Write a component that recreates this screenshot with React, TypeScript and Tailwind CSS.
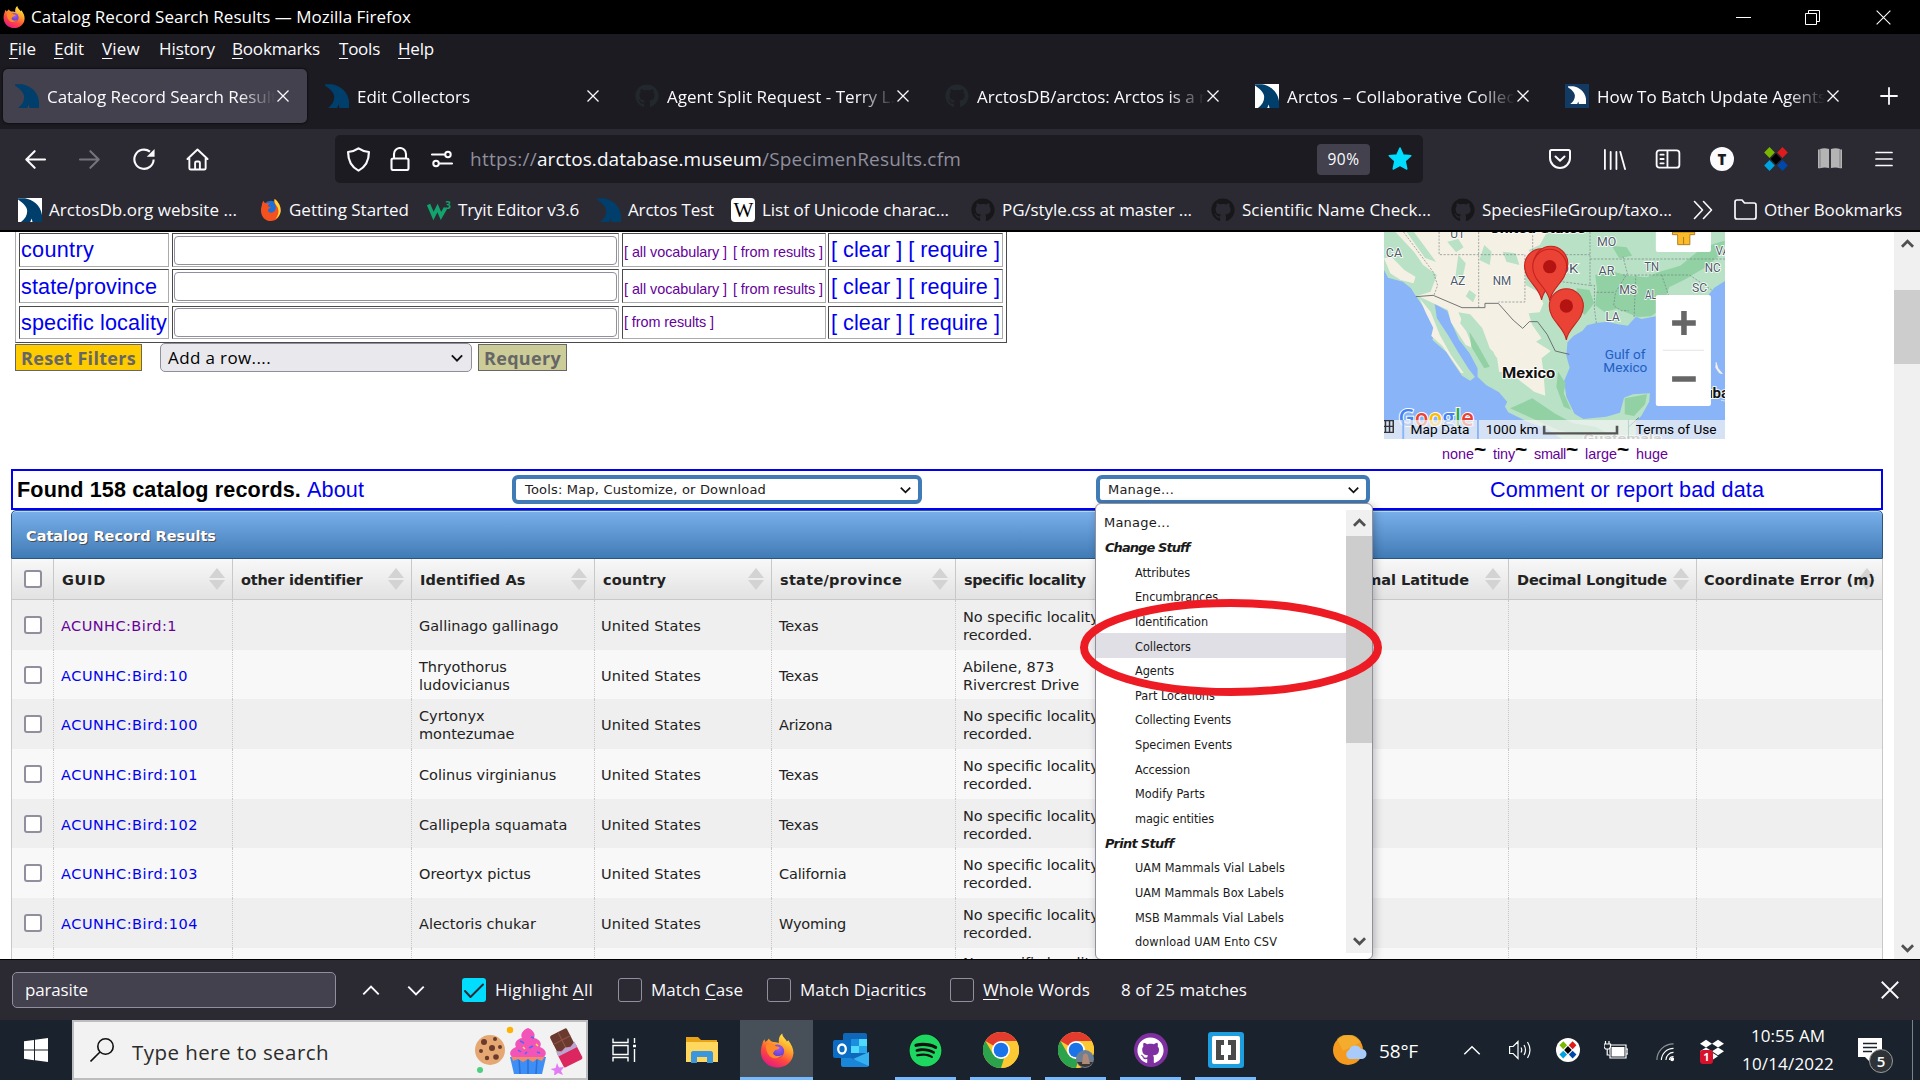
import { useLayoutEffect, useRef, type ReactNode } from "react";
import { FaGithub, FaSpotify, FaDropbox } from "react-icons/fa";

/* Single-line label whose tracking is adjusted so that it spans `w` pixels. */
function Fit({ w, className = "", children }: { w: number; className?: string; children: ReactNode }) {
  const ref = useRef<HTMLSpanElement>(null);
  useLayoutEffect(() => {
    const el = ref.current;
    if (!el) return;
    el.style.letterSpacing = "0px";
    const n = (el.textContent || "").length;
    const natural = el.getBoundingClientRect().width;
    el.style.letterSpacing = `${(w - natural) / n}px`;
  }, [w]);
  return (
    <span ref={ref} className={`inline-block shrink-0 whitespace-pre ${className}`}>
      {children}
    </span>
  );
}

const UI = "font-['Open_Sans','Noto_Sans',sans-serif]";
const ARIAL = "font-['Liberation_Sans',sans-serif]";
const VERD = "font-['DejaVu_Sans',sans-serif]";

/* ---------- icons ---------- */

function Firefox({ className }: { className: string }) {
  return (
    <svg viewBox="0 0 24 24" className={className}>
      <defs>
        <linearGradient id="ffBody" x1="0.8" y1="0" x2="0.25" y2="1">
          <stop offset="0" stopColor="#fff44f" />
          <stop offset="0.35" stopColor="#ffa62b" />
          <stop offset="0.65" stopColor="#ff4a3d" />
          <stop offset="1" stopColor="#e31587" />
        </linearGradient>
        <radialGradient id="ffCore" cx="0.6" cy="0.3" r="0.8">
          <stop offset="0" stopColor="#a05cf0" />
          <stop offset="1" stopColor="#4a35c8" />
        </radialGradient>
      </defs>
      <path d="M1.600 7.500c.2-1.500.8-2.700 1.600-3.500l.5 2c1-.9 2-1.400 2.600-2.500.6 1.200 1.500 2.100 3 2.500 2-.2 3.500.5 4 .8-.3-3 .4-5.500 2.400-6.800 0 2 1.500 3.200 2.800 4.700l.5 1 1-1c2.500 3.500 4 6.500 3.500 10C22.800 20.500 18 24 12.200 24 5.800 24 .8 19.200.6 13c0-2 .3-4 1-5.500z" fill="url(#ffBody)" />
      <circle cx="12.200" cy="12.500" r="4.800" fill="url(#ffCore)" />
      <path d="M4.500 7.500c2.500-.8 5-.5 6.800 1.500 1.200.2 2.400.3 2.400 1-.1.900-1.800 1.200-2.900 1.700-.8.500-.7 1.500-1.700 2 1.200 2.600 4.400 2.800 6.600 1.300-1.500 2.600-6.200 3.600-9 .8C4.500 13.500 3.800 10 4.500 7.500z" fill="#ff8a2a" />
    </svg>
  );
}

function FirefoxOld({ className }: { className: string }) {
  return (
    <svg viewBox="0 0 24 24" className={className}>
      <circle cx="12" cy="12.500" r="10.500" fill="#1b6fd6" />
      <path d="M2 7c0-2 1-4 2-5 .3 1.500 1 2.500 2.500 3 1.500-.5 3-.3 4.500 0-1.500.8-2.500 1.800-2.500 3.200 1 .2 2.800.2 3.200 1-.2 1-2 1.500-3 2-.5 3 2.500 4.500 5.300 3.300 3.500-1.500 4.500-6 1.500-10.500-.5-1.500-.2-2.800.5-4 4 3 7 7.500 6.500 12.500C22 19.500 17.500 24 12 24 6 24 1.500 19.500 1.200 13.500 1 11 1.200 9 2 7z" fill="#f4511e" />
      <path d="M16 0c4 3 6.500 7.500 6.500 12.500 0 4-2.500 7.500-5.500 9.200 3-4 4-8 2.500-12-1-2.500-4.500-5-3.500-9.700z" fill="#ffd83a" />
    </svg>
  );
}

function Bear({ className, fill = "#003e6b" }: { className: string; fill?: string }) {
  return (
    <svg viewBox="0 0 24 24" className={className}>
      <path d="M0 .3h7C14.500 1.500 22.500 7 24 17v7h-9.500l-.8-3.500-1.500 3.500H3c4.200-3 6.200-7 6.200-11C9.200 8.500 4.500 4.500 0 1.500z" fill={fill} />
    </svg>
  );
}

function Favicon({ kind }: { kind: string }) {
  if (kind === "bear") return <Bear className="size-6 shrink-0" />;
  if (kind === "bearWhiteBg")
    return (
      <span className="size-6 shrink-0 bg-white">
        <Bear className="size-6" />
      </span>
    );
  if (kind === "bearBlueBg")
    return (
      <span className="size-6 shrink-0 bg-[#123a63] px-[3px] pt-px pb-[3px]">
        <Bear className="h-5 w-[18px]" fill="#ffffff" />
      </span>
    );
  if (kind === "github") return <FaGithub className="size-6 shrink-0 text-[#22282d]" />;
  if (kind === "githubDark") return <FaGithub className="size-6 shrink-0 text-[#17171a]" />;
  if (kind === "firefox") return <FirefoxOld className="h-6 w-[22px] shrink-0" />;
  if (kind === "w3")
    return (
      <span className={`relative size-6 shrink-0 ${UI} text-[#12a46c]`}>
        <svg viewBox="0 0 24 24" className="size-6">
          <path d="M1.500 6.500l5 11.500 4-8 3.500 8L18.500 10" fill="none" stroke="#12a46c" strokeWidth="3.600" />
        </svg>
        <span className="absolute top-px right-0 text-[10px] leading-3 font-bold">3</span>
      </span>
    );
  return (
    <span className="flex size-6 shrink-0 items-center justify-center rounded-[4px] bg-white font-['Liberation_Serif',serif] text-[21px] leading-6 tracking-[-1px] text-black">
      W
    </span>
  );
}

function Cross({ className, size = 12, sw = 1.300 }: { className?: string; size?: number; sw?: number }) {
  return (
    <svg width={size} height={size} viewBox="0 0 12 12" className={`shrink-0 ${className ?? ""}`}>
      <path d="M.5 .5l11 11M11.500 .5l-11 11" stroke="#fbfbfe" strokeWidth={sw} fill="none" />
    </svg>
  );
}

function Chevron({ className, dir = "down", color = "#111", sw = 2.200 }: { className: string; dir?: "up" | "down"; color?: string; sw?: number }) {
  return (
    <svg viewBox="0 0 14 10" className={`shrink-0 ${className}`}>
      <path d={dir === "down" ? "M1 2l6 6 6-6" : "M1 8l6-6 6 6"} fill="none" stroke={color} strokeWidth={sw} />
    </svg>
  );
}

function Line({ className, d, color = "#fbfbfe", sw = 2, box = "0 0 24 24" }: { className: string; d: string; color?: string; sw?: number; box?: string }) {
  return (
    <svg viewBox={box} className={`shrink-0 ${className}`} fill="none" stroke={color} strokeWidth={sw} strokeLinecap="round" strokeLinejoin="round">
      <path d={d} />
    </svg>
  );
}

function Diamonds({ className, round = false }: { className: string; round?: boolean }) {
  const k = round ? "translate(3.300 3.300) scale(.72)" : "";
  return (
    <svg viewBox="0 0 24 24" className={`shrink-0 ${className}`}>
      {round && <circle cx="12" cy="12" r="12" fill="#fff" />}
      <g transform={k}>
        <path d="M5.500 0l5.300 5.500-5.300 5.500L.2 5.500z" fill="#7ab800" />
        <path d="M18.500 0l5.300 5.500-5.300 5.500-5.300-5.500z" fill="#e01b1b" />
        <path d="M5.500 13l5.300 5.500-5.300 5.500-5.300-5.500z" fill="#00a3dd" />
        <path d="M18.500 13l5.300 5.500-5.300 5.500-5.300-5.500z" fill="#0047ab" />
        <path d="M12 6.500l5.300 5.500-5.300 5.500L6.700 12z" fill="#000" />
      </g>
    </svg>
  );
}

/* ---------- browser chrome ---------- */

function TitleBar() {
  return (
    <div className={`flex h-[34px] items-center bg-black pl-[3px] ${UI}`}>
      <Firefox className="h-[24px] w-[22px]" />
      <Fit w={380} className="ml-[6px] text-[17px] leading-6 text-white">
        Catalog Record Search Results — Mozilla Firefox
      </Fit>
      <div className="ml-auto flex h-full items-center pr-[29px]">
        <span className="h-px w-[15px] bg-white" />
        <svg className="ml-[54px] size-[15px]" viewBox="0 0 15 15" fill="none" stroke="#fff">
          <path d="M.5 3.500h11v11H.5zM3.500 3.500v-3h11v11h-3" />
        </svg>
        <Cross className="ml-[56px]" size={15} sw={0.900} />
      </div>
    </div>
  );
}

function MenuBar() {
  const items: [string, string, string, number, string][] = [
    ["", "F", "ile", 27, "ml-[9px]"],
    ["", "E", "dit", 30, "ml-[18px]"],
    ["", "V", "iew", 38, "ml-[18px]"],
    ["Hi", "s", "tory", 56, "ml-[19px]"],
    ["", "B", "ookmarks", 88, "ml-[17px]"],
    ["", "T", "ools", 41, "ml-[19px]"],
    ["", "H", "elp", 36, "ml-[18px]"],
  ];
  return (
    <div className={`flex h-[32px] items-center bg-[#1c1b22] pb-[2px] text-[17px] leading-6 text-[#fbfbfe] ${UI}`}>
      {items.map(([a, b, c, w, m]) => (
        <span key={b + c} className={m}>
          <Fit w={w}>
            {a}
            <span className="underline decoration-1 underline-offset-[3px]">{b}</span>
            {c}
          </Fit>
        </span>
      ))}
    </div>
  );
}

function Tabs() {
  const tabs: [string, string, number][] = [
    ["bear", "Catalog Record Search Results", 238],
    ["bear", "Edit Collectors", 113],
    ["github", "Agent Split Request - Terry L.", 228],
    ["github", "ArctosDB/arctos: Arctos is a r", 229],
    ["bearWhiteBg", "Arctos – Collaborative Collect", 234],
    ["bearBlueBg", "How To Batch Update Agents", 229],
  ];
  return (
    <div className={`flex h-[63px] bg-[#1c1b22] pt-[3px] pl-[3px] ${UI}`}>
      {tabs.map(([icon, label, w], i) => (
        <div key={label} className="w-[310px] shrink-0">
          <div className={`flex h-[54px] w-[304px] items-center rounded-[5px] pl-3 ${i === 0 ? "bg-[#42414d] shadow-[0_0_3px_#000]" : ""}`}>
            <Favicon kind={icon} />
            <div className="mt-[2px] ml-[8px] w-[228px] overflow-hidden [mask-image:linear-gradient(to_right,#000_84%,transparent_100%)]">
              <Fit w={w} className="align-top text-[17px] leading-[26px] text-[#fbfbfe]">
                {label}
              </Fit>
            </div>
            <Cross className="ml-[2px]" />
          </div>
        </div>
      ))}
      <Line className="mt-[18px] ml-[17px] size-[18px]" box="0 0 18 18" d="M9 1v16M1 9h16" sw={1.800} />
    </div>
  );
}

function NavBar() {
  return (
    <div className={`flex h-[57px] items-center bg-[#2b2a33] pt-[3px] ${UI}`}>
      <Line className="ml-[25px] size-[21px]" d="M23 12H2M11 2.500L1.500 12l9.500 9.500" sw={2.300} />
      <Line className="ml-[33px] size-[21px]" d="M1 12h21M13 2.500l9.500 9.500-9.500 9.500" sw={2.300} color="#75747d" />
      <svg viewBox="0 0 24 24" className="ml-[33px] size-[22px]">
        <path d="M22.500 12.500A10.500 10.500 0 1 1 18.500 4" fill="none" stroke="#fbfbfe" strokeWidth="2.300" />
        <path d="M23.500 1v8.500H15z" fill="#fbfbfe" />
      </svg>
      <Line className="ml-[31px] size-[23px]" d="M3.500 11v10c0 1 .5 1.500 1.500 1.500h14c1 0 1.500-.5 1.500-1.500V11M1.500 11.500L12 1.500l10.500 10M9.500 22v-6.500c0-1 .5-1.500 1.500-1.500h2c1 0 1.500.5 1.500 1.500V22" sw={2} />
      <div className="ml-[126px] flex h-[48px] w-[1088px] items-center rounded-[5px] bg-[#1c1b22]">
        <Line className="ml-[11px] size-[25px]" d="M12 1.300c3.500 2.400 6.800 3.200 10 3.500 0 8-2.500 14-10 17.900C4.500 18.800 2 12.800 2 4.800c3.200-.3 6.500-1.100 10-3.500z" sw={2.100} />
        <Line className="ml-[17px] size-[24px]" d="M6 11.500V7a6 6 0 0 1 12 0v4.500M5 11.500h14c1 0 1.500.5 1.500 1.500v8.500c0 1-.5 1.500-1.500 1.500H5c-1 0-1.500-.5-1.500-1.500V13c0-1 .5-1.500 1.500-1.500z" sw={2.100} />
        <Line className="ml-[19px] size-[22px]" d="M1 7h13M18.500 4a3 3 0 1 1 0 6 3 3 0 0 1 0-6M23 17H10M5.500 14a3 3 0 1 1 0 6 3 3 0 0 1 0-6" sw={2.200} />
        <div className="ml-[17px] flex text-[19px] leading-[28px] text-[#8f8f9d]">
          <Fit w={67}>https://</Fit>
          <Fit w={225} className="text-[#fbfbfe]">arctos.database.museum</Fit>
          <Fit w={199}>/SpecimenResults.cfm</Fit>
        </div>
        <div className="ml-auto flex h-[31px] w-[53px] items-center justify-center rounded-[4px] bg-[#42414d] text-[#fbfbfe]">
          <Fit w={32} className="text-[15.5px] leading-5">90%</Fit>
        </div>
        <svg viewBox="0 0 24 24" className="mr-[11px] ml-[18px] size-6">
          <path d="M12 1l3.100 7 7.700.8-5.700 5.200 1.700 8L12 18.300 5.200 22l1.700-8L1.200 8.800 8.900 8z" fill="#00ddff" stroke="#00ddff" strokeLinejoin="round" strokeWidth="1.500" />
        </svg>
      </div>
      <Line className="ml-[125px] size-[24px]" d="M3.500 3h17c1 0 1.500.5 1.500 1.500V11a10 10 0 0 1-20 0V4.500C2 3.500 2.500 3 3.500 3zM7.500 9.500l4.500 4.300 4.500-4.300" sw={2} />
      <Line className="ml-[31px] size-[23px]" d="M2 2v20M8 4v18M14 4v18M18 4l5 18" sw={1.900} />
      <Line className="ml-[29px] size-[26px]" d="M4 4h16c1.500 0 2.500 1 2.500 2.500v11c0 1.500-1 2.500-2.500 2.500H4c-1.500 0-2.500-1-2.500-2.500v-11C1.500 5 2.500 4 4 4zM11.500 4v16M5 8h3M5 12h3M5 16h3" sw={1.700} />
      <span className="ml-[29px] flex size-6 items-center justify-center rounded-full bg-[#fbfbfe] text-[15px] leading-none font-extrabold text-[#1c1b22]">T</span>
      <Diamonds className="ml-[30px] size-6" />
      <svg viewBox="0 0 24 22" className="ml-[30px] h-[22px] w-6">
        <path d="M0 1.500h2V1c3-1 6-1 9 0v19c-3-.8-6-.8-9 .3H0zM24 1.500h-2V1c-3-1-6-1-9 0v19c3-.8 6-.8 9 .3h2z" fill="#b4b4b4" />
        <path d="M12 1v20M2 1.500v18M22 1.500v18" stroke="#55555c" strokeWidth="0.600" />
      </svg>
      <Line className="ml-[33px] size-[18px]" box="0 0 18 18" d="M1 2.500h16M1 9h16M1 15.500h16" sw={1.700} />
    </div>
  );
}

function BookmarksBar() {
  const marks: [string, string, number, string][] = [
    ["bearWhiteBg", "ArctosDb.org website ...", 188, "w-[242px]"],
    ["firefox", "Getting Started", 120, "w-[167px]"],
    ["w3", "Tryit Editor v3.6", 121, "w-[170px]"],
    ["bear", "Arctos Test", 86, "w-[134px]"],
    ["wiki", "List of Unicode charac...", 187, "w-[240px]"],
    ["githubDark", "PG/style.css at master ...", 190, "w-[240px]"],
    ["githubDark", "Scientific Name Check...", 189, "w-[240px]"],
    ["githubDark", "SpeciesFileGroup/taxo...", 190, "w-[242px]"],
  ];
  return (
    <div className={`flex h-[46px] items-center border-b-2 border-black bg-[#2b2a33] pt-[3px] pl-[18px] text-[17px] leading-6 text-[#fbfbfe] ${UI}`}>
      {marks.map(([icon, label, w, cell]) => (
        <div key={label} className={`flex shrink-0 items-center gap-[7px] ${cell}`}>
          <Favicon kind={icon} />
          <Fit w={w}>{label}</Fit>
        </div>
      ))}
      <Line className="h-[20px] w-[20px]" box="0 0 20 20" d="M1.500 1.500L9.500 10l-8 8.500M10.500 1.500l8 8.500-8 8.500" sw={1.600} />
      <Line className="ml-[21px] h-[21px] w-[23px]" box="0 0 23 21" d="M1 3c0-1.200.8-2 2-2h5l2.500 3H20c1.200 0 2 .8 2 2v12c0 1.200-.8 2-2 2H3c-1.200 0-2-.8-2-2z" sw={1.700} />
      <Fit w={138} className="ml-[7px]">Other Bookmarks</Fit>
    </div>
  );
}

/* ---------- page content ---------- */

function FilterTable() {
  const rows: [string, number, boolean, string, string][] = [
    ["country", 73, true, "h-[34px] mb-[2px]", "-mt-px"],
    ["state/province", 136, true, "h-[34px] mb-[3px]", "mt-px"],
    ["specific locality", 146, false, "h-[33px]", "mt-px"],
  ];
  const cell = "flex h-full shrink-0 items-center border border-t-[#4a4a4a] border-l-[#4a4a4a] border-r-[#ababab] border-b-[#ababab]";
  return (
    <div className={`ml-[15px] h-[111px] w-[992px] border-r border-b border-l border-r-[#4a4a4a] border-b-[#4a4a4a] border-l-[#ababab] pt-px pl-[3px] ${ARIAL}`}>
      {rows.map(([name, w, vocab, h, nudge], i) => (
        <div key={name} className={`flex ${h}`}>
          <div className={`${cell} w-[150px] pl-px`}>
            <Fit w={w} className={`text-[21.6px] leading-6 text-[#0000ee] ${nudge}`}>{name}</Fit>
          </div>
          <div className={`${cell} ml-[3px] w-[447px] px-px`}>
            <div className="h-[29px] w-full rounded-[4px] border border-[#8f8f9d] bg-white" />
          </div>
          <div className={`${cell} ml-[3px] w-[204px] pl-px text-[14.4px] leading-4 text-[#660099]`}>
            {vocab && <Fit w={103} className={i === 0 ? "mt-[4px] mr-[6px]" : "mt-[6px] mr-[6px]"}>[ all vocabulary ]</Fit>}
            <Fit w={90} className={i === 0 ? "mt-[4px]" : i === 1 ? "mt-[6px]" : "-mt-[2px]"}>[ from results ]</Fit>
          </div>
          <div className={`${cell} ml-[2px] w-[175px] pl-[2px]`}>
            <Fit w={169} className={`text-[21.6px] leading-6 text-[#0000ee] ${nudge}`}>[ clear ] [ require ]</Fit>
          </div>
        </div>
      ))}
    </div>
  );
}

function FilterActions() {
  return (
    <div className={`flex items-start pl-[15px] ${UI}`}>
      <div className="mt-px flex h-[27px] w-[127px] items-center justify-center border border-[#666] bg-[#ffcc00] text-[#666]">
        <Fit w={115} className="text-[18px] leading-5 font-bold">Reset Filters</Fit>
      </div>
      <div className="ml-[18px] flex h-[29px] w-[312px] items-center justify-between rounded-[5px] border border-[#8f8f9d] bg-[#e9e9ed] pr-[8px] pl-[7px]">
        <Fit w={103} className="text-[17px] leading-5 text-black">Add a row....</Fit>
        <Chevron className="h-[10px] w-[12px]" sw={2.200} />
      </div>
      <div className="mt-px ml-[6px] flex h-[27px] w-[89px] items-center justify-center border border-[#666] bg-[#cccc99] text-[#666]">
        <Fit w={77} className="text-[18px] leading-5 font-bold">Requery</Fit>
      </div>
    </div>
  );
}

function Pin({ x, y }: { x: number; y: number }) {
  return (
    <g transform={`translate(${x} ${y})`}>
      <path d="M0 0c-4-38-46-58-46-102a46 52 0 0 1 92 0c0 44-42 64-46 102z" fill="#ea4335" stroke="#c5221f" strokeWidth="3" />
      <ellipse cx="0" cy="-102" rx="18" ry="20" fill="#b31412" />
    </g>
  );
}

function MapDrawing() {
  const labels: [string, number, number, number][] = [
    ["CA", 124, 95, 44], ["UT", 298, 38, 40], ["AZ", 298, 179, 41], ["NM", 413, 179, 50], ["OK", 592, 143, 52],
    ["MO", 695, 64, 52], ["AR", 699, 149, 43], ["TN", 823, 139, 40], ["NC", 986, 141, 43], ["SC", 952, 200, 41],
    ["MS", 755, 208, 48], ["AL", 825, 222, 32], ["LA", 718, 287, 38], ["VA", 1015, 90, 40],
  ];
  return (
    <svg viewBox="119 21 922 621" preserveAspectRatio="none" className="block h-[207px] w-[341px] font-[Roboto]">
      <rect x="119" y="21" width="922" height="621" fill="#8ab4f8" />
      <path d="M119 21H1041V168L1012 188 985 225 965 262 880 270 855 274 815 282 800 275 778 302 752 298 722 290 692 294 668 301 655 318 632 332 615 352 612 392 621 428 606 468 612 515 634 566 658 582 720 575 757 563 768 518 792 508 838 505 836 530 815 572 800 590 800 642H600L560 612 510 592 455 562 446 545 452 530 430 502 395 480 372 455 372 430 350 384 322 344 304 300 290 258 256 236 262 280 292 330 322 386 348 432 365 456 352 467 330 452 305 412 288 382 250 345 256 310 236 262 205 213 192 190 170 170 130 158 119 135Z" fill="#b9e1c5" />
      <path d="M150 21H560L540 60 510 75 528 110 500 130 502 180 535 200 550 235 540 262 510 265 520 300 545 340 530 350 570 378 545 400 550 440 555 512 525 500 490 470 462 445 430 440 425 400 405 370 385 310 352 268 320 262 335 300 360 370 340 360 300 292 292 255 255 236 210 212 245 200 262 150 225 120 200 80Z" fill="#f5f0e4" />
      <path d="M119 100l20-5 35 40 30 20-5 20-35-10-28-20zM215 220l30 40 25 70 30 60 35 55-8-2-25-40-25-40-30-30 5-25-20-45z" fill="#f5f0e4" />
      <path d="M320 90l20 25-10 50-18-10zM350 195l18 15-8 22-20-18zM390 60l20 20-5 40-28-15zM330 275l30 10 30 75 25 20 10 40-25-15-40-60-35-50zM180 21h20l40 60 20 30-30-12zM290 50l30-8 14 25-20 15zM440 80l35 5 10 35-35-10z" fill="#b9e1c5" />
      <path d="M690 150l50-10 40 12 50 5 30-15 60-20 50-45 40-20 30-10v30l-45 45-60 40-45 25-20 65-30 22-35 2-55-25-35 10-25-20 5-50zM735 62l40 5 15 25-35 8zM640 190l35 5 12 40-25 35-22-20zM770 520l60-12-5 30-30 35-25-5zM460 550l60-30 60 45 50 30 60 10 60 35h-60l-100-25-80-40zM350 320l25 45 30 60-15 5-35-65zM590 440l20 35-5 30 20 50-20-10-20-60z" fill="#92d1a4" />
      <g fill="none" stroke="#6f7b80" strokeWidth="1.800" strokeDasharray="6 4">
        <path d="M172 21l80 120 12 40-10 30M268 21v68H500M375 21v227M521 21v68M500 89v142H428M521 89h155M592 89v80l84 12M676 21v160M676 102h365M676 181h12v70l5 43M740 202h-52M765 95l12 50-32 57-5 40 20 15h20M765 150h180l60 45M800 150l-5 130M870 150l18 60" />
      </g>
      <path d="M205 215l47-4 78 37h62v-13h36l40 50 26 25 18-20h22l26 38 22 50 38 10M780 606l28-28" fill="none" stroke="#5d6468" strokeWidth="2.500" />
      <g fontSize="36" fill="#4d5a66" stroke="#fff" strokeWidth="5" paintOrder="stroke">
        {labels.map(([t, x, y, w]) => (
          <text key={t} x={x} y={y} textLength={w} lengthAdjust="spacingAndGlyphs">{t}</text>
        ))}
      </g>
      <g fontWeight="700" fill="#111" stroke="#fff" strokeWidth="5" paintOrder="stroke">
        <text x="404" y="25" fontSize="38" textLength="260" lengthAdjust="spacingAndGlyphs">United States</text>
        <text x="438" y="459" fontSize="42" textLength="144" lengthAdjust="spacingAndGlyphs">Mexico</text>
        <text x="958" y="518" fontSize="42" textLength="94" lengthAdjust="spacingAndGlyphs">Cuba</text>
        <text x="658" y="652" fontSize="34" textLength="212" lengthAdjust="spacingAndGlyphs" fill="#777">Guatemala</text>
      </g>
      <g fontSize="37" fill="#2060c0">
        <text x="716" y="401" textLength="110" lengthAdjust="spacingAndGlyphs">Gulf of</text>
        <text x="712" y="441" textLength="119" lengthAdjust="spacingAndGlyphs">Mexico</text>
      </g>
      <path d="M1017 412l5 18 12 16-8-2-10-16zM1030 526l11 2" fill="#f5f0e4" stroke="#f5f0e4" strokeWidth="2" />
      <Pin x={545} y={225} />
      <Pin x={570} y={218} />
      <Pin x={567} y={227} />
      <Pin x={612} y={345} />
      <g fontWeight="600" stroke="#fff" strokeWidth="6" paintOrder="stroke" className="font-['Open_Sans']">
        <text x="158" y="604" textLength="204" lengthAdjust="spacingAndGlyphs" fontSize="68">
          <tspan fill="#4285f4">G</tspan><tspan fill="#ea4335">o</tspan><tspan fill="#fbbc04">o</tspan><tspan fill="#4285f4">g</tspan><tspan fill="#34a853">l</tspan><tspan fill="#ea4335">e</tspan>
        </text>
      </g>
      <rect x="119" y="585" width="922" height="57" fill="#f5f5f5" fillOpacity="0.700" />
      <path d="M171 585v57M373 585v57" stroke="#8ab4f8" strokeWidth="5" />
      <path d="M780 585v57" stroke="#9cc" strokeWidth="2" />
      <path d="M110 587h34v35h-34zM110 604h34M123 587v35M134 587v35" fill="none" stroke="#333" strokeWidth="4" />
      <path d="M552 602v23h197v-23" fill="none" stroke="#555" strokeWidth="7" />
      <g fontSize="38" fill="#000">
        <text x="191" y="626" textLength="159" lengthAdjust="spacingAndGlyphs">Map Data</text>
        <text x="394" y="626" textLength="143" lengthAdjust="spacingAndGlyphs">1000 km</text>
        <text x="800" y="626" textLength="218" lengthAdjust="spacingAndGlyphs">Terms of Use</text>
      </g>
      <rect x="854" y="10" width="149" height="71" rx="6" fill="#fff" />
      <path d="M899 21h60v8h-13v30h-33V29h-14z" fill="#fbbc2c" stroke="#a8741a" strokeWidth="2.500" />
      <path d="M929 36v23" stroke="#a8741a" strokeWidth="2.500" />
      <rect x="854" y="210" width="149" height="333" rx="6" fill="#fff" />
      <path d="M898 294h64M898 462h64" stroke="#666" strokeWidth="16" />
      <path d="M930 258v72" stroke="#666" strokeWidth="15" />
      <path d="M873 376h111" stroke="#e3e3e3" strokeWidth="3" />
    </svg>
  );
}

function MapPanel() {
  const sizes: [string, number][] = [["none", 32], ["tiny", 22], ["small", 32], ["large", 32], ["huge", 32]];
  return (
    <div className="ml-auto w-[341px]">
      <MapDrawing />
      <div className={`mt-[5px] flex items-center pl-[58px] ${ARIAL}`}>
        {sizes.map(([s, w], i) => (
          <span key={s} className="flex">
            <Fit w={w} className="text-[14.4px] leading-5 text-[#660099]">{s}</Fit>
            {i < 4 && <span className="-mt-[5px] mr-[5px] w-[14px] text-[21px] leading-5 font-bold text-black">~</span>}
          </span>
        ))}
      </div>
    </div>
  );
}

function FoundBar() {
  return (
    <div className={`ml-[11px] flex h-[41px] w-[1872px] items-center border-2 border-[#0000f5] bg-white pl-[4px] ${ARIAL} text-[21.6px] leading-6`}>
      <Fit w={284} className="font-bold text-black">Found 158 catalog records.</Fit>
      <Fit w={57} className="ml-[6px] text-[#0000ee]">About</Fit>
      <div className="ml-[148px] flex h-[29px] w-[410px] shrink-0 items-center justify-between rounded-[6px] border-4 border-[#417bb5] bg-white pr-[7px] pl-[9px]">
        <Fit w={241} className={`${VERD} text-[13px] leading-4 text-[#222]`}>Tools: Map, Customize, or Download</Fit>
        <Chevron className="h-[8px] w-[11px]" />
      </div>
      <div className="ml-[174px] flex h-[29px] w-[274px] shrink-0 items-center justify-between rounded-[6px] border-4 border-[#417bb5] bg-white pr-[7px] pl-[8px]">
        <Fit w={66} className={`${VERD} text-[13px] leading-4 text-[#222]`}>Manage...</Fit>
        <Chevron className="h-[8px] w-[11px]" />
      </div>
      <Fit w={274} className="ml-[120px] text-[#0000ee]">Comment or report bad data</Fit>
    </div>
  );
}

function SortIcon() {
  return (
    <svg viewBox="0 0 16 22" className="mr-[7px] ml-auto h-[22px] w-4 shrink-0" fill="#d3d3d3">
      <path d="M8 0l8 10H0zM8 22l8-10H0z" />
    </svg>
  );
}

function Box() {
  return <span className="size-[18px] shrink-0 rounded-[3px] border-2 border-[#8f8f9d] bg-white" />;
}

const COLS = "grid grid-cols-[42px_179px_179px_183px_177px_184px_366px_187px_188px_186px]";

type Row = { id: string; name: string; state: string; loc: string; h: string; visited?: boolean };
const NO_LOC = "No specific locality\nrecorded.";
const ROWS: Row[] = [
  { id: "1", name: "Gallinago gallinago", state: "Texas", loc: NO_LOC, h: "h-[50px]", visited: true },
  { id: "10", name: "Thryothorus\nludovicianus", state: "Texas", loc: "Abilene, 873\nRivercrest Drive", h: "h-[49px]" },
  { id: "100", name: "Cyrtonyx\nmontezumae", state: "Arizona", loc: NO_LOC, h: "h-[50px]" },
  { id: "101", name: "Colinus virginianus", state: "Texas", loc: NO_LOC, h: "h-[50px]" },
  { id: "102", name: "Callipepla squamata", state: "Texas", loc: NO_LOC, h: "h-[49px]" },
  { id: "103", name: "Oreortyx pictus", state: "California", loc: NO_LOC, h: "h-[50px]" },
  { id: "104", name: "Alectoris chukar", state: "Wyoming", loc: NO_LOC, h: "h-[50px]" },
];

function ResultsTable() {
  const heads: [string, number][] = [
    ["GUID", 44],
    ["other identifier", 121],
    ["Identified As", 105],
    ["country", 63],
    ["state/province", 122],
    ["specific locality", 121],
  ];
  const line = "border-r border-dotted border-[#c8c8c8]";
  return (
    <div className={`ml-[11px] w-[1872px] ${VERD} text-[14.5px] leading-[18px] text-[#222]`}>
      <div className="flex h-[49px] items-center rounded-t-[5px] border border-[#2b5580] bg-linear-to-b from-[#79b0ec] to-[#417bb5] pt-[2px] pl-[14px] shadow-[inset_0_1px_0_#b5d5f5]">
        <Fit w={190} className="font-bold text-white [text-shadow:1px_1px_0_#4c4c4c]">Catalog Record Results</Fit>
      </div>
      <div className={`${COLS} h-[41px] border-b border-l border-[#c8c8c8] bg-linear-to-b from-[#f8f8f8] to-[#e2e2e2] font-bold`}>
        <div className="flex items-center justify-center border-r border-[#c8c8c8]">
          <Box />
        </div>
        {heads.map(([t, w], i) => (
          <div key={t} className={`flex items-center pl-2 ${i === 5 ? "" : "border-r border-[#c8c8c8]"}`}>
            <Fit w={w} className="mt-[2px]">{t}</Fit>
            {i !== 5 && <SortIcon />}
          </div>
        ))}
        <div className="col-start-8 flex items-center justify-end border-r border-[#c8c8c8]">
          <Fit w={138} className="mt-[2px] mr-[17px]">Decimal Latitude</Fit>
          <span className="-ml-[1px]">
            <SortIcon />
          </span>
        </div>
        <div className="flex items-center border-r border-[#c8c8c8] pl-2">
          <Fit w={150} className="mt-[2px]">Decimal Longitude</Fit>
          <SortIcon />
        </div>
        <div className="relative flex items-center border-r border-[#c8c8c8] pl-[7px]">
          <span className="absolute right-0">
            <SortIcon />
          </span>
          <Fit w={171} className="relative mt-[2px]">Coordinate Error (m)</Fit>
        </div>
      </div>
      {ROWS.map((r, i) => (
        <div key={r.id} className={`${COLS} ${r.h} border-l border-[#c8c8c8] ${i % 2 ? "bg-[#f8f8f8]" : "bg-[#efefef]"}`}>
          <div className={`flex items-center justify-center ${line}`}>
            <Box />
          </div>
          <div className={`flex items-center pt-[2px] pl-[7px] ${line}`}>
            <Fit w={r.id.length === 1 ? 116 : r.id.length === 2 ? 127 : 137} className={r.visited ? "text-[#660099]" : "text-[#0000ee]"}>{`ACUNHC:Bird:${r.id}`}</Fit>
          </div>
          <div className={line} />
          <div className={`flex items-center pt-[2px] pl-[7px] whitespace-pre ${line}`}>{r.name}</div>
          <div className={`flex items-center pt-[2px] pl-[6px] ${line}`}>
            <Fit w={100}>United States</Fit>
          </div>
          <div className={`flex items-center pt-[2px] pl-[7px] tracking-[-0.01em] ${line}`}>{r.state}</div>
          <div className="flex items-center pt-[2px] pl-[7px] whitespace-pre">{r.loc}</div>
          <div className={line} />
          <div className={line} />
          <div className="border-r border-[#c8c8c8]" />
        </div>
      ))}
      <div className={`${COLS} h-[11px] overflow-hidden border-l border-[#c8c8c8] bg-[#f8f8f8]`}>
        <div className={line} />
        <div className={line} />
        <div className={line} />
        <div className={line} />
        <div className={line} />
        <div className={line} />
        <div className="pt-[6px] pl-[7px] whitespace-pre">No specific locality</div>
        <div className={line} />
        <div className={line} />
        <div className="border-r border-[#c8c8c8]" />
      </div>
    </div>
  );
}

function ManageMenu() {
  const items: [string, number, "top" | "group" | "item"][] = [
    ["Manage...", 66, "top"],
    ["Change Stuff", 84, "group"],
    ["Attributes", 55, "item"],
    ["Encumbrances", 83, "item"],
    ["Identification", 73, "item"],
    ["Collectors", 56, "item"],
    ["Agents", 39, "item"],
    ["Part Locations", 80, "item"],
    ["Collecting Events", 96, "item"],
    ["Specimen Events", 97, "item"],
    ["Accession", 55, "item"],
    ["Modify Parts", 70, "item"],
    ["magic entities", 79, "item"],
    ["Print Stuff", 68, "group"],
    ["UAM Mammals Vial Labels", 150, "item"],
    ["UAM Mammals Box Labels", 149, "item"],
    ["MSB Mammals Vial Labels", 149, "item"],
    ["download UAM Ento CSV", 142, "item"],
  ];
  const styles = {
    top: `pl-[8px] ${VERD} text-[13px]`,
    group: `pl-[9px] ${VERD} text-[13px] font-bold italic`,
    item: "pl-[39px] font-['DejaVu_Sans_Condensed','DejaVu_Sans',sans-serif] text-[12.6px]",
  };
  return (
    <div className="absolute top-[271px] left-[1095px] flex h-[457px] w-[278px] rounded-[6px] border border-[#8f8f9d] bg-white py-[6px] text-[#1a1a1a] shadow-[2px_2px_8px_rgba(0,0,0,0.250)]">
      <div className="flex-1">
        {items.map(([t, w, kind]) => (
          <div key={t} className={`flex h-[24.650px] items-center pt-[2px] leading-4 ${styles[kind]} ${t === "Collectors" ? "bg-[#e0dfe6]" : ""}`}>
            <Fit w={w}>{t}</Fit>
          </div>
        ))}
      </div>
      <div className="flex w-[26px] flex-col items-center bg-[#f0f0f0]">
        <Chevron dir="up" className="my-[8px] h-[10px] w-[13px]" color="#505050" sw={3} />
        <div className="h-[207px] w-full bg-[#cdcdcd]" />
        <Chevron className="mt-auto mb-[7px] h-[10px] w-[13px]" color="#505050" sw={3} />
      </div>
    </div>
  );
}

function Page() {
  return (
    <div className="relative flex h-[727px] overflow-hidden bg-white">
      <div className="w-[1894px] shrink-0">
        <div className="flex h-[237px] pr-[169px]">
          <div>
            <FilterTable />
            <FilterActions />
          </div>
          <MapPanel />
        </div>
        <FoundBar />
        <ResultsTable />
      </div>
      <div className="flex w-[26px] flex-col items-center bg-[#f0f0f0]">
        <Chevron dir="up" className="mt-[7px] h-[10px] w-[13px]" color="#505050" sw={3} />
        <div className="mt-[41px] h-[74px] w-full bg-[#cdcdcd]" />
        <Chevron className="mt-auto mb-[6px] h-[10px] w-[13px]" color="#505050" sw={3} />
      </div>
      <ManageMenu />
      <svg className="absolute top-[362px] left-[1075px] h-[108px] w-[312px]" viewBox="0 0 312 108">
        <ellipse cx="156" cy="53.500" rx="147" ry="44.500" fill="none" stroke="#ed1c24" strokeWidth="8" />
      </svg>
    </div>
  );
}

/* ---------- find bar ---------- */

function FindBar() {
  const opts: [string, string, string, number, string][] = [
    ["Match ", "C", "ase", 92, "ml-[25px]"],
    ["Match D", "i", "acritics", 126, "ml-[24px]"],
    ["", "W", "hole Words", 107, "ml-[24px]"],
  ];
  const u = "underline decoration-1 underline-offset-[3px]";
  return (
    <div className={`flex h-[61px] items-center border-t border-black bg-[#2b2a33] pl-[12px] text-[17px] leading-6 text-[#fbfbfe] ${UI}`}>
      <div className="flex h-[36px] w-[324px] items-center rounded-[5px] border border-[#8f8f9d] bg-[#42414d] pl-[12px]">
        <Fit w={63}>parasite</Fit>
      </div>
      <Chevron dir="up" className="ml-[26px] h-[13px] w-[18px]" color="#fbfbfe" sw={1.500} />
      <Chevron className="ml-[27px] h-[13px] w-[18px]" color="#fbfbfe" sw={1.500} />
      <span className="ml-[37px] size-6 rounded-[3px] bg-[#00ddff]">
        <Line className="size-6" d="M3 13l5.500 6L21 6.500" color="#2b2a33" sw={2} />
      </span>
      <Fit w={98} className="ml-[9px]">Highlight <span className={u}>A</span>ll</Fit>
      {opts.map(([a, b, c, w, m]) => (
        <div key={b} className={`flex items-center ${m}`}>
          <span className="size-6 rounded-[3px] border border-[#8f8f9d]" />
          <Fit w={w} className="ml-[9px]">
            {a}
            <span className={u}>{b}</span>
            {c}
          </Fit>
        </div>
      ))}
      <Fit w={126} className="ml-[31px]">8 of 25 matches</Fit>
      <Cross className="mr-[21px] ml-auto" size={18} sw={1.200} />
    </div>
  );
}

/* ---------- taskbar ---------- */

function Sweets() {
  return (
    <svg viewBox="0 0 110 50" className="ml-auto h-[50px] w-[110px]">
      <circle cx="16" cy="25" r="15" fill="#e5a873" />
      <g fill="#6b3a2b">
        <circle cx="10" cy="17" r="3" /><circle cx="21" cy="14" r="2" /><circle cx="18" cy="23" r="3" /><circle cx="26" cy="22" r="2" /><circle cx="7" cy="26" r="2" /><circle cx="13" cy="33" r="2.200" /><circle cx="22" cy="32" r="2.800" />
      </g>
      <circle cx="36" cy="5" r="3.200" fill="#ffb300" />
      <circle cx="6" cy="45" r="3" fill="#4cd07d" />
      <path d="M36 32h36l-4 17H40z" fill="#3d8ef5" />
      <path d="M45 34l1 15M54 34v15M63 34l-1 15" stroke="#2b6fd6" strokeWidth="1.500" />
      <path d="M37 31c4-3 30-3 34 0l-3 5-5-2-4 3-5-3-5 3-5-3-5 2z" fill="#f08a6a" />
      <path d="M54 3c5 2 8 6 6 10 6 1 8 6 6 9 6 2 8 8 3 10H39c-5-2-3-8 3-10-2-3 0-8 6-9-2-4 1-8 6-10z" fill="#f254b8" />
      <path d="M46 16l4 2M57 12l3 1M44 25l3 2M55 23l4-2M63 27l3 1M51 29l2-2" stroke="#4a6af5" strokeWidth="1.500" />
      <path d="M62 19l2 2M49 22l2 2" stroke="#ffe14a" strokeWidth="1.500" />
      <g transform="rotate(-27 92 22)">
        <rect x="82" y="5" width="19" height="20" rx="2" fill="#6b3a2f" />
        <path d="M91.500 5v19M82 14h19" stroke="#8c5345" strokeWidth="1.200" />
        <rect x="81" y="23" width="21" height="17" rx="2" fill="#dc2660" />
        <path d="M81 21l5 3 5-2 5 2 6-3v6H81z" fill="#b9a6cf" />
      </g>
      <path d="M83 38l2 4.500 5-.5-3 4 2 4-5-2-4 3 .5-5-4-2 5-1z" fill="#e17cf5" />
    </svg>
  );
}

function Chrome() {
  return (
    <svg viewBox="0 0 36 36" className="size-9">
      <circle cx="18" cy="18" r="18" fill="#fcc934" />
      <path d="M18 18L2.400 9A18 18 0 0 1 33.600 9z" fill="#e33b2e" />
      <path d="M18 9h15.600A18 18 0 0 1 18 36l7.800-13.500z" fill="#fcc934" />
      <path d="M2.400 9l7.800 13.500L18 27l3-.5L18 36A18 18 0 0 1 2.400 9z" fill="#2ba24c" />
      <circle cx="18" cy="18" r="9" fill="#fff" />
      <circle cx="18" cy="18" r="7.300" fill="#1a73e8" />
    </svg>
  );
}

function TaskApp({ children, className, bar }: { children?: ReactNode; className: string; bar?: string }) {
  return (
    <div className={`flex h-full shrink-0 flex-col items-center ${className}`}>
      <div className="flex h-[57px] items-center pt-[3px]">{children}</div>
      {bar && <span className={`h-[3px] bg-[#76b9ff] ${bar}`} />}
    </div>
  );
}

function Taskbar() {
  return (
    <div className={`flex h-[60px] items-center bg-[#1a232d] ${UI}`}>
      <svg viewBox="0 0 24 24" className="ml-[24px] size-6" fill="#fff">
        <path d="M0 3.300l10-1.400v9.500H0zM11 1.700L24 0v11.400H11zM0 12.600h10v9.600L0 20.700zM11 12.600h13V24l-13-1.800z" />
      </svg>
      <div className="ml-[24px] flex h-[60px] w-[516px] items-center border-2 border-[#bdbdbd] bg-[#f2f2f2] pr-[2px] pl-[16px]">
        <svg viewBox="0 0 24 24" className="size-6" fill="none" stroke="#111" strokeWidth="1.600">
          <circle cx="15.500" cy="8.500" r="7.700" />
          <path d="M10 14L.5 23.500" />
        </svg>
        <Fit w={197} className="mt-[3px] ml-[18px] text-[20.5px] leading-7 text-[#2b2b2b]">Type here to search</Fit>
        <Sweets />
      </div>
      <svg viewBox="0 0 24 24" className="ml-[24px] size-6" fill="none" stroke="#fff" strokeWidth="1.400">
        <path d="M1 .5v4h15v-4M1 7.500h15v9H1zM1 23.500v-4h15v4M22.500 0v5M22.500 11v13" />
        <path d="M21 8h3" strokeWidth="2.500" />
      </svg>
      <TaskApp className="ml-[28px] w-[76px]">
        <svg viewBox="0 0 32 28" className="h-[28px] w-8">
          <path d="M0 1h12l3 3h16v22H0z" fill="#e8a317" />
          <path d="M0 6h32v20H0z" fill="#ffd75e" />
          <path d="M5 27V17c0-1 1-2 2-2h18c1 0 2 1 2 2v10h-6v-6H11v6z" fill="#3a96dd" />
        </svg>
      </TaskApp>
      <TaskApp className="w-[73px] bg-[#474f58]" bar="w-full">
        <Firefox className="h-[35px] w-[34px]" />
      </TaskApp>
      <TaskApp className="w-[75px]">
        <svg viewBox="0 0 36 34" className="h-[34px] w-9">
          <rect x="10" y="0" width="24" height="26" rx="2" fill="#1066b8" />
          <path d="M18 6h8v7h-8z" fill="#1a8fe0" />
          <path d="M26 6h8v7h-8zM18 13h8v7h-8z" fill="#50d9ff" />
          <path d="M26 13h8v7h-8z" fill="#28a8ea" />
          <path d="M8 20l14 7 14-8v13c0 1-1 2-2 2H10c-1 0-2-1-2-2z" fill="#1a86d9" />
          <path d="M36 19v14L20 26z" fill="#35b1f1" />
          <rect x="0" y="7" width="18" height="18" rx="2" fill="#0b6cc4" />
          <ellipse cx="9" cy="16" rx="3.800" ry="4.500" fill="none" stroke="#fff" strokeWidth="2.300" />
        </svg>
      </TaskApp>
      <TaskApp className="w-[75px]" bar="w-[61px]">
        <span className="rounded-full bg-[#111]"><FaSpotify className="size-[33px] text-[#1ed760]" /></span>
      </TaskApp>
      <TaskApp className="w-[75px]" bar="w-[61px]">
        <Chrome />
      </TaskApp>
      <TaskApp className="w-[75px]" bar="w-[61px]">
        <span className="relative">
          <Chrome />
          <svg viewBox="0 0 18 18" className="absolute right-0 bottom-0 size-[18px]">
            <circle cx="9" cy="9" r="9" fill="#6d7f95" />
            <path d="M1 12h16a9 9 0 0 1-16 0z" fill="#3b3532" />
            <path d="M7 6a2.500 2.500 0 0 1 5 0l2 8H6z" fill="#b08a78" />
          </svg>
        </span>
      </TaskApp>
      <TaskApp className="w-[75px]" bar="w-[61px]">
        <span className="flex size-[34px] items-center justify-center rounded-full bg-[#7e2fa0]">
          <FaGithub className="size-[27px] text-white" />
        </span>
      </TaskApp>
      <TaskApp className="w-[75px]" bar="w-[61px]">
        <svg viewBox="0 0 36 36" className="size-9">
          <rect width="36" height="36" rx="3" fill="#1e9ede" />
          <rect x="4" y="4" width="28" height="28" rx="2" fill="#fff" />
          <path d="M16 8H8v20h8v-5h-3V13h3zM20 8h8v20h-8v-5h3V13h-3z" fill="#4a4a4a" />
        </svg>
      </TaskApp>
      <svg viewBox="0 0 34 30" className="ml-[70px] h-[30px] w-[34px]">
        <circle cx="15" cy="15" r="15" fill="#f39a1f" />
        <path d="M4 4a15 15 0 0 1 24 3L10 16z" fill="#f7b733" opacity=".6" />
        <path d="M16 24a5 5 0 0 1 0-9 6.500 6.500 0 0 1 12-1 5 5 0 0 1 1 10z" fill="#a9cbfa" />
      </svg>
      <Fit w={39} className="mt-[2px] ml-[12px] text-[19px] leading-6 text-white">58°F</Fit>
      <Chevron dir="up" className="ml-[45px] h-[13px] w-[18px]" color="#fff" sw={1.100} />
      <svg viewBox="0 0 23 20" className="ml-[28px] h-[20px] w-[23px]" fill="none" stroke="#fff" strokeWidth="1.200">
        <path d="M.6 6.500h3.500L9 1.500v17l-4.900-5H.6zM12 7.500q1.500 2.500 0 5M15 5q3 5 0 10M18.500 2q5 8 0 16" />
      </svg>
      <Diamonds className="ml-[24px] size-6" round />
      <svg viewBox="0 0 24 18" className="ml-[24px] h-[18px] w-6">
        <path d="M6 4h16v13H6zM22 8h2v5h-2" fill="none" stroke="#fff" strokeWidth="1.200" />
        <path d="M7.500 6h13v9.500h-13z" fill="#fff" />
        <path d="M1.500 0v3M5 0v3M0 3h6.500v3L5 8H1.500L0 6zM3.200 8v6H6" fill="#1a232d" stroke="#fff" strokeWidth="1.200" />
      </svg>
      <svg viewBox="0 0 20 20" className="mt-[4px] ml-[28px] h-[20px] w-[18px]" fill="none" stroke="#fff" strokeWidth="1.300">
        <path d="M1 19C1 9 9 1 19.500 1" opacity=".5" />
        <path d="M6 19C6 12 12 6 19.500 6M11 19c0-5 4-8.500 8.500-8.500M15 19c0-2.500 2-4 4.500-4" />
        <circle cx="18" cy="18" r="1.500" fill="#fff" />
      </svg>
      <span className="relative ml-[26px] size-6">
        <FaDropbox className="size-6 text-white" />
        <span className="absolute bottom-[-2px] left-0 flex h-[14px] w-[13px] items-center justify-center rounded-[3px] bg-[#d8102c] text-[11px] font-bold text-white">1</span>
      </span>
      <div className="ml-[18px] flex w-[92px] flex-col items-center text-[17px] leading-[28px] text-white">
        <Fit w={74}>10:55 AM</Fit>
        <Fit w={92}>10/14/2022</Fit>
      </div>
      <div className="relative ml-[24px] h-[24px] w-[24px]">
        <svg viewBox="0 0 24 24" className="size-6">
          <path d="M0 0h24v19h-9l-4 4-4-4H0z" fill="#fff" />
          <path d="M5 5.500h14M5 9.500h14M5 13.500h9" stroke="#1a232d" strokeWidth="1.300" />
        </svg>
        <span className="absolute top-[11px] left-[11px] flex size-6 items-center justify-center rounded-full border border-[#9a9a9a] bg-[#2e3338] text-[15px] leading-none font-semibold text-white">5</span>
      </div>
      <span className="ml-[30px] h-full w-[1px] bg-[#7d8288]" />
    </div>
  );
}

export default function App() {
  return (
    <div className="h-[1080px] w-[1920px] overflow-hidden bg-white">
      <TitleBar />
      <MenuBar />
      <Tabs />
      <NavBar />
      <BookmarksBar />
      <Page />
      <FindBar />
      <Taskbar />
    </div>
  );
}
